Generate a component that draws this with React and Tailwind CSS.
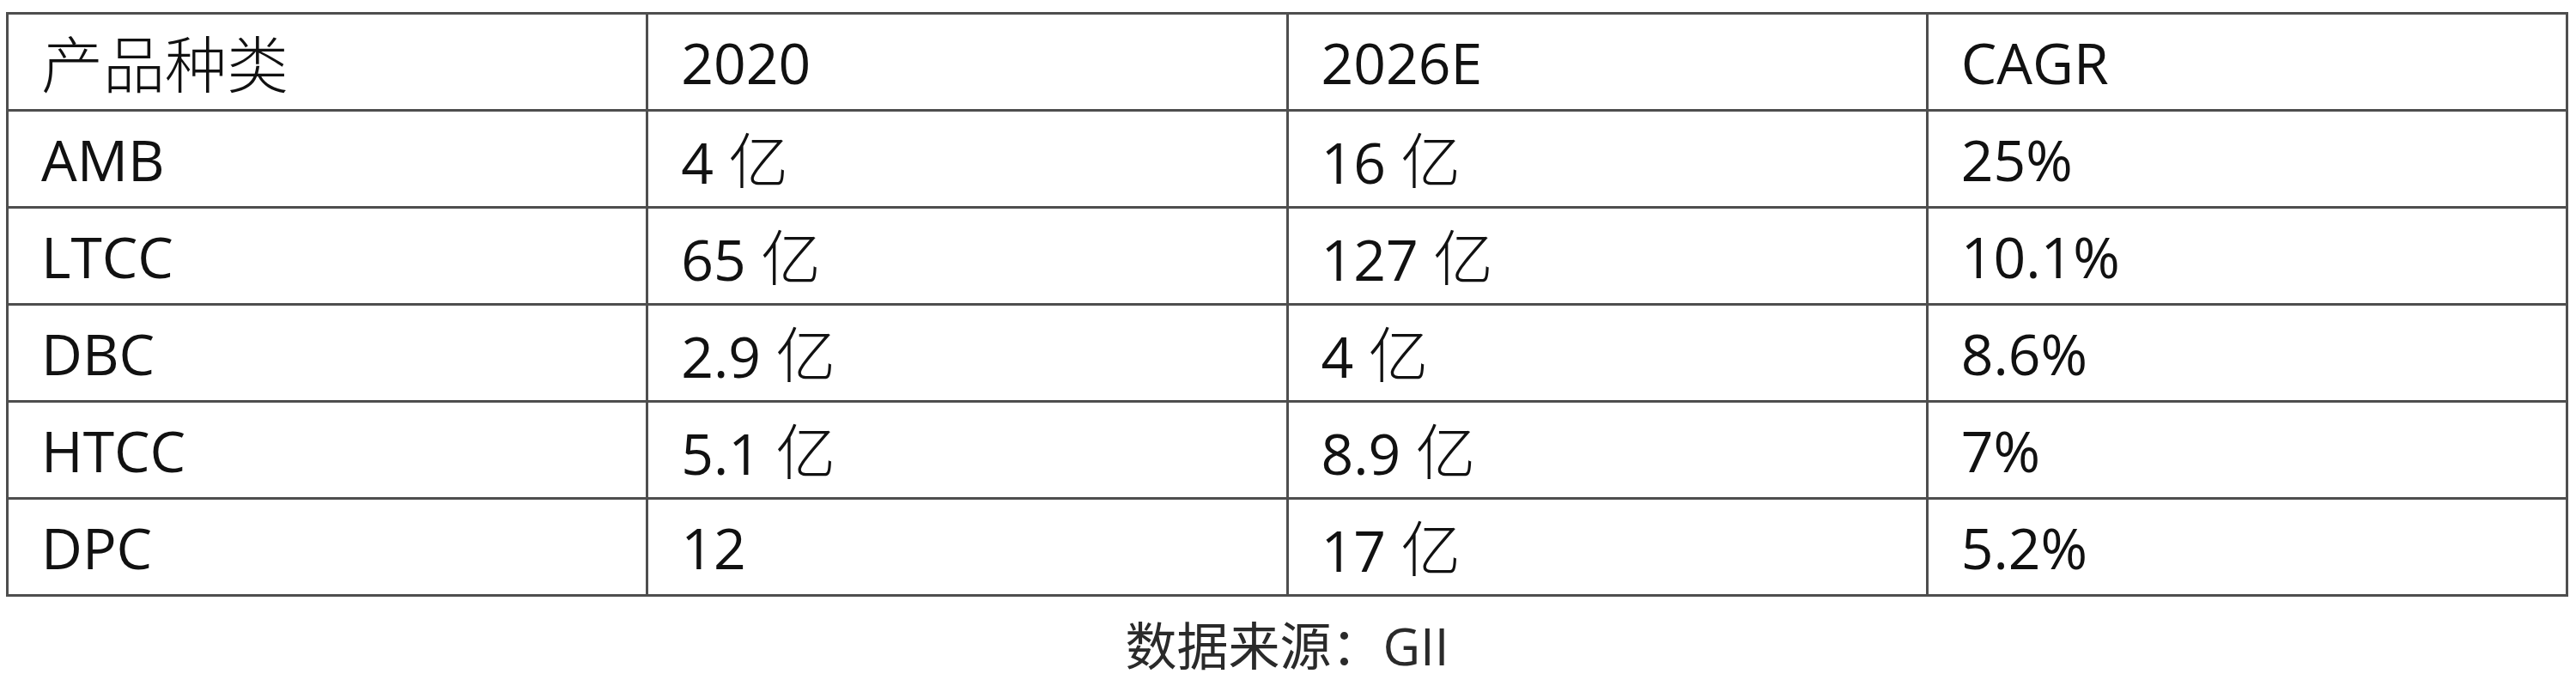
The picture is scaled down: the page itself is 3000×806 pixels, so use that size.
const rows = [
  ["AMB", "4", "16", "25%"],
  ["LTCC", "65", "127", "10.1%"],
  ["DBC", "2.9", "4", "8.6%"],
  ["HTCC", "5.1", "8.9", "7%"],
  ["DPC", "12", "17", "5.2%"],
];

function Yi({ value }) {
  return (
    <>
      {value}{" "}
      <span className="font-['Noto_Sans_CJK_SC',sans-serif] text-[70px] font-light">亿</span>
    </>
  );
}

function Cell({ children }) {
  return (
    <td className="h-[113px] border-[3px] border-[#4e4e4e] pl-[38px] align-middle">{children}</td>
  );
}

export default function App() {
  return (
    <div className="min-h-[806px] w-[3000px] bg-white pl-[7px] pt-[14px] font-['Open_Sans','Noto_Sans_CJK_SC',sans-serif] text-[#111111]">
      <table className="w-[2984px] table-fixed border-collapse text-[66px] leading-none">
        <tbody>
          <tr>
            <Cell>
              <span className="font-['Noto_Sans_CJK_SC',sans-serif] text-[72px] font-light">产品种类</span>
            </Cell>
            <Cell>2020</Cell>
            <Cell>2026E</Cell>
            <Cell>CAGR</Cell>
          </tr>
          {rows.map(([name, a, b, rate]) => (
            <tr key={name}>
              <Cell>{name}</Cell>
              <Cell>{name === "DPC" ? a : <Yi value={a} />}</Cell>
              <Cell>
                <Yi value={b} />
              </Cell>
              <Cell>{rate}</Cell>
            </tr>
          ))}
        </tbody>
      </table>
      <p className="mt-[24px] w-[2984px] text-center text-[60px] leading-[60px] text-[#2a2a2a]">
        <span className="font-['Noto_Sans_CJK_SC',sans-serif]">数据来源：</span>GII
      </p>
    </div>
  );
}
